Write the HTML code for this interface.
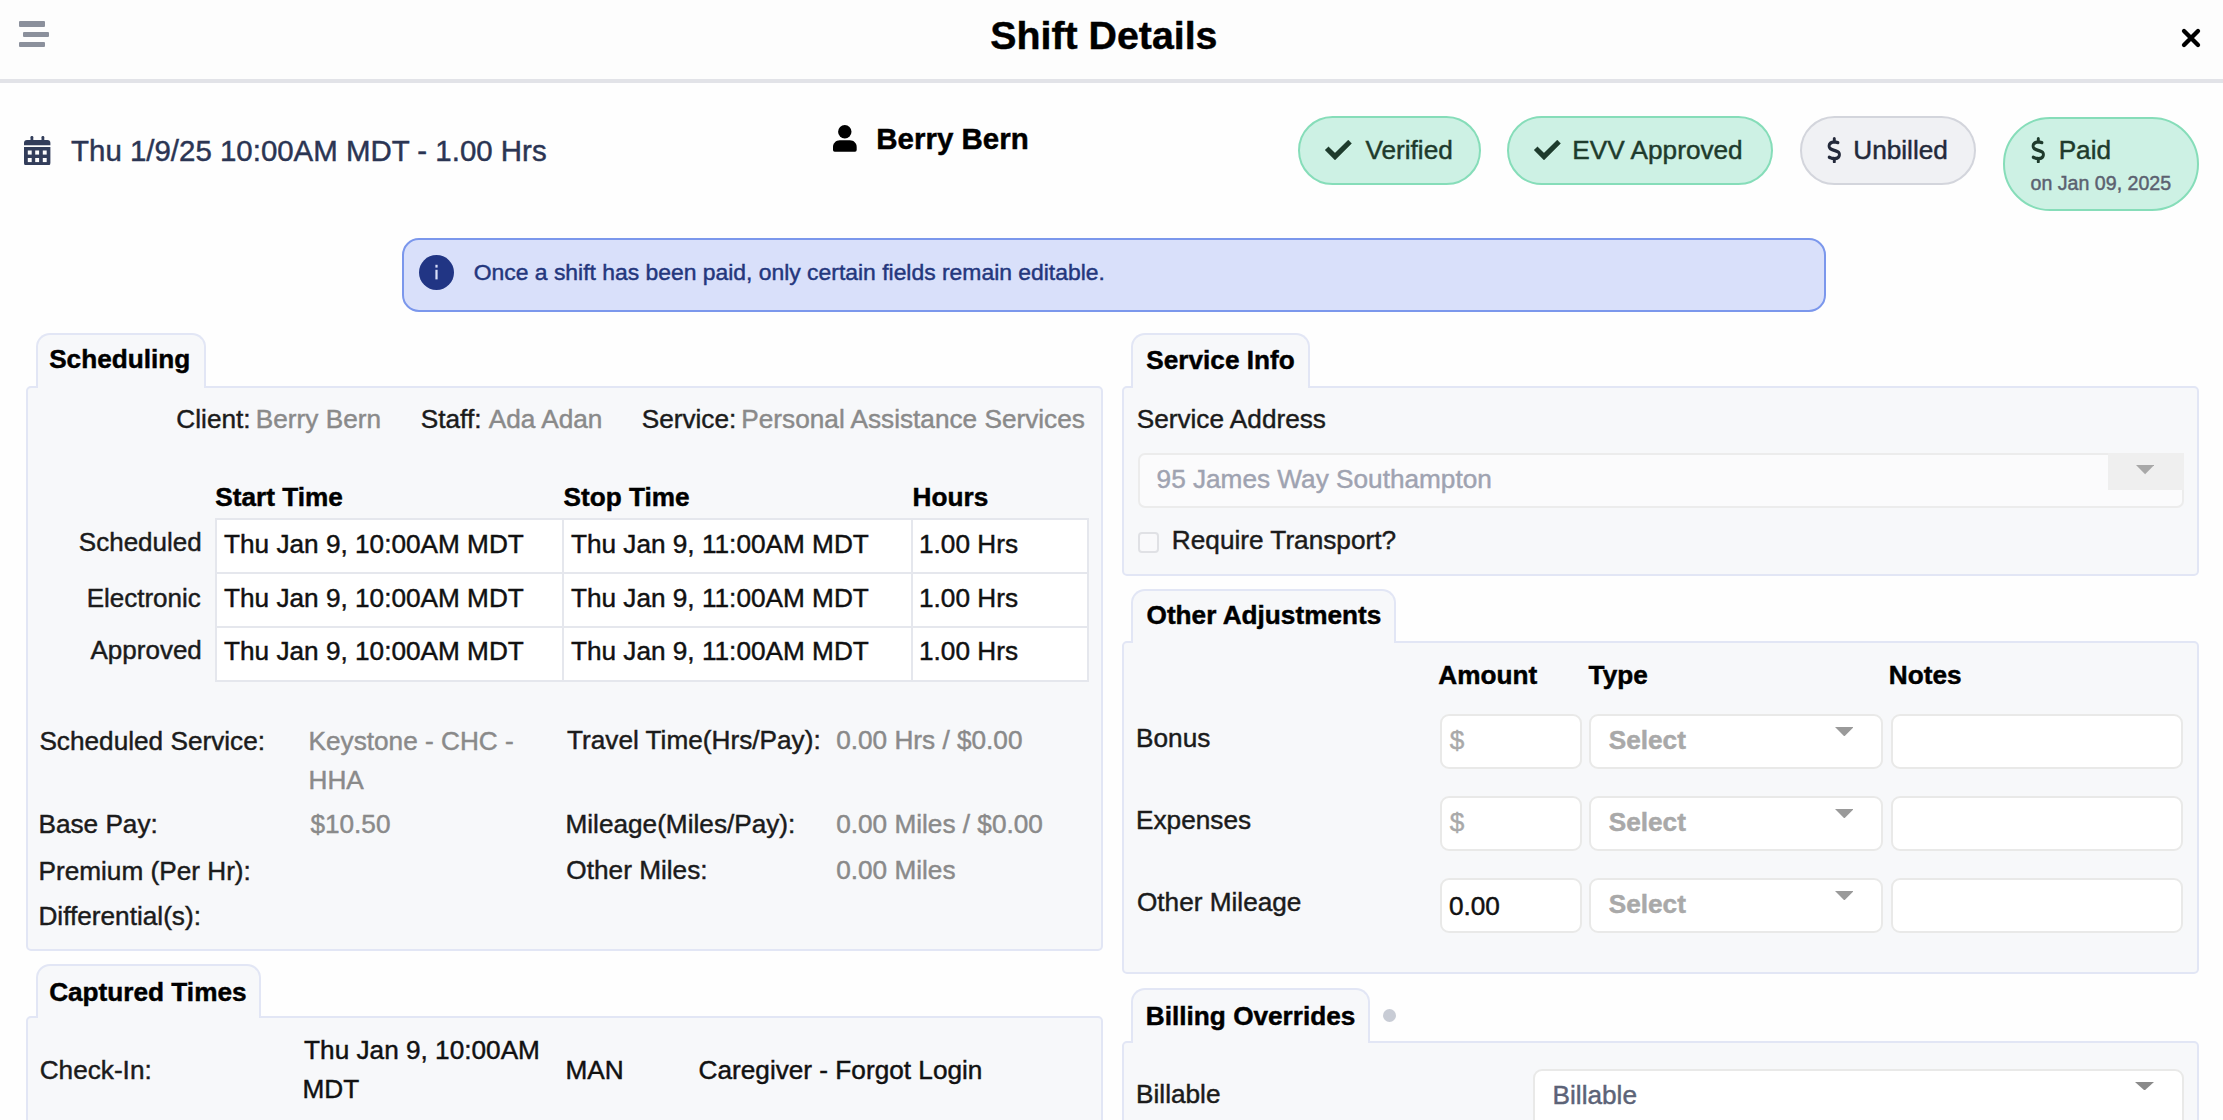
<!DOCTYPE html>
<html><head><meta charset="utf-8"><title>Shift Details</title>
<style>
html,body{margin:0;padding:0;}
body{width:2223px;height:1120px;overflow:hidden;position:relative;background:#fefefe;font-family:"Liberation Sans",sans-serif;}
.t{position:absolute;white-space:nowrap;line-height:1;font-family:"Liberation Sans",sans-serif;-webkit-text-stroke:0.45px currentColor;}
</style></head><body>
<div style="position:absolute;left:0;top:0;width:2223px;height:79px;background:#fdfdfd"></div>
<div style="position:absolute;left:0;top:79px;width:2223px;height:4px;background:#e2e3e8"></div>
<div style="position:absolute;left:18.75px;top:21.4px;width:25.85px;height:5.40px;background:#8b909c;border-radius:1px"></div>
<div style="position:absolute;left:22.8px;top:32.1px;width:25.90px;height:5.40px;background:#8b909c;border-radius:1px"></div>
<div style="position:absolute;left:18.75px;top:42px;width:25.85px;height:5.30px;background:#8b909c;border-radius:1px"></div>
<div class="t" style="left:990.37px;top:16.23px;font-size:39.3px;font-weight:bold;color:#000;">Shift Details</div>
<svg style="position:absolute;left:2178px;top:25.3px" width="26" height="26" viewBox="0 0 26 26"><path d="M6 6 L20 20 M20 6 L6 20" stroke="#000" stroke-width="4.3" stroke-linecap="round"/></svg>
<svg style="position:absolute;left:24.4px;top:135.5px" width="26.4" height="29.7" viewBox="0 0 26.4 29.7">
<rect x="6.5" y="0" width="2.8" height="6" rx="1.2" fill="#323d5a"/><rect x="17.5" y="0" width="2.8" height="6" rx="1.2" fill="#323d5a"/>
<path d="M0 6.9 Q0 3.9 3 3.9 H23.4 Q26.4 3.9 26.4 6.9 V9.3 H0 Z" fill="#323d5a"/>
<path d="M0 11 H26.4 V26.9 Q26.4 29.5 23.8 29.5 H2.6 Q0 29.5 0 26.9 Z" fill="#323d5a"/>
<g fill="#fdfdfd"><rect x="3.8" y="14.5" width="3.9" height="4.1"/><rect x="11.2" y="14.5" width="3.9" height="4.1"/><rect x="18.8" y="14.5" width="3.9" height="4.1"/>
<rect x="3.8" y="22" width="3.9" height="4.1"/><rect x="11.2" y="22" width="3.9" height="4.1"/><rect x="18.8" y="22" width="3.9" height="4.1"/></g></svg>
<div class="t" style="left:71.04px;top:136.27px;font-size:29.45px;color:#2b3553;">Thu 1/9/25 10:00AM MDT - 1.00 Hrs</div>
<svg style="position:absolute;left:832.9px;top:125px" width="23.7" height="26.8" viewBox="0 0 23.7 26.8">
<circle cx="11.8" cy="6.7" r="6.7" fill="#000"/><path d="M0 22 C0 18.2 3 15.3 6.8 15.3 H16.9 C20.7 15.3 23.7 18.2 23.7 22 V25 Q23.7 26.75 22 26.75 H1.7 Q0 26.75 0 25 Z" fill="#000"/></svg>
<div class="t" style="left:876.23px;top:123.53px;font-size:29.5px;font-weight:bold;color:#000;">Berry Bern</div>
<div style="position:absolute;left:1297.5px;top:116.3px;width:183.00px;height:69.00px;box-sizing:border-box;background:#cdf1e4;border:2px solid #86ddb9;border-radius:48px"></div>
<svg style="position:absolute;left:1325.4px;top:139.5px" width="26.6" height="20.1" viewBox="0 0 26.6 20.1"><path d="M0 10.1 L3.5 6.8 L10 13.1 L23.3 0 L26.6 3.4 L10 20.1 Z" fill="#1e3b2c" stroke="#1e3b2c" stroke-width="0.3" stroke-linejoin="round"/></svg>
<div class="t" style="left:1365.48px;top:137.12px;font-size:26.2px;color:#1e3b2c;">Verified</div>
<div style="position:absolute;left:1506.6px;top:116.3px;width:266.70px;height:69.00px;box-sizing:border-box;background:#cdf1e4;border:2px solid #86ddb9;border-radius:48px"></div>
<svg style="position:absolute;left:1534.2px;top:139.5px" width="26.6" height="20.1" viewBox="0 0 26.6 20.1"><path d="M0 10.1 L3.5 6.8 L10 13.1 L23.3 0 L26.6 3.4 L10 20.1 Z" fill="#1e3b2c" stroke="#1e3b2c" stroke-width="0.3" stroke-linejoin="round"/></svg>
<div class="t" style="left:1572.35px;top:137.12px;font-size:26.2px;color:#1e3b2c;">EVV Approved</div>
<div style="position:absolute;left:1799.8px;top:116.3px;width:176.70px;height:69.00px;box-sizing:border-box;background:#f0f1f4;border:2px solid #d3d5dc;border-radius:48px"></div>
<svg style="position:absolute;left:1827px;top:136.6px" width="14.6" height="26.6" viewBox="0 0 320 512" preserveAspectRatio="none"><path d="M160 0c17.7 0 32 14.3 32 32V67.7c1.6 .2 3.1 .4 4.7 .7c.4 .1 .7 .1 1.1 .2l48 8.8c17.4 3.2 28.9 19.9 25.7 37.2s-19.9 28.9-37.2 25.7l-47.5-8.7c-31.3-4.6-58.9-1.5-78.3 6.2s-27.2 18.300-29 28.1c-2 10.7-.5 16.7 1.2 20.4c1.8 3.9 5.5 8.3 12.8 13.2c16.3 10.7 41.3 17.7 73.7 26.3l2.9 .8c28.6 7.6 63.6 16.8 89.6 33.8c14.2 9.3 27.6 21.9 35.9 39.5c8.5 17.9 10.3 37.9 6.4 59.2c-6.9 38-33.1 63.4-65.6 76.7c-13.7 5.6-28.6 9.2-44.4 11V480c0 17.7-14.3 32-32 32s-32-14.3-32-32V445.1c-.4-.1-.9-.1-1.3-.2l-.2 0 0 0c-24.4-3.8-64.5-14.3-91.5-26.300c-16.1-7.2-23.4-26.1-16.2-42.2s26.1-23.4 42.2-16.2c20.9 9.300 55.3 18.5 75.2 21.6c31.9 4.7 58.2 2 76-5.3c16.9-6.9 24.6-16.9 26.8-28.9c1.9-10.6 .4-16.7-1.3-20.4c-1.9-4-5.6-8.4-13-13.3c-16.4-10.7-41.5-17.7-74-26.3l-2.8-.7 0 0C119.4 279.3 84.4 270 58.4 253c-14.2-9.3-27.5-22-35.8-39.6c-8.4-17.9-10.1-37.9-6.1-59.2C23.7 116 52.3 91.2 84.8 78.3c13.3-5.3 27.9-8.9 43.2-11V32c0-17.7 14.3-32 32-32z" fill="#23293a"/></svg>
<div class="t" style="left:1853.28px;top:137.12px;font-size:26.2px;color:#23293a;">Unbilled</div>
<div style="position:absolute;left:2003.1px;top:116.5px;width:195.50px;height:94.90px;box-sizing:border-box;background:#cdf1e4;border:2px solid #86ddb9;border-radius:48px"></div>
<svg style="position:absolute;left:2031.2px;top:136.6px" width="14.6" height="26.6" viewBox="0 0 320 512" preserveAspectRatio="none"><path d="M160 0c17.7 0 32 14.3 32 32V67.7c1.6 .2 3.1 .4 4.7 .7c.4 .1 .7 .1 1.1 .2l48 8.8c17.4 3.2 28.9 19.9 25.7 37.2s-19.9 28.9-37.2 25.7l-47.5-8.7c-31.3-4.6-58.9-1.5-78.3 6.2s-27.2 18.300-29 28.1c-2 10.7-.5 16.7 1.2 20.4c1.8 3.9 5.5 8.3 12.8 13.2c16.3 10.7 41.3 17.7 73.7 26.3l2.9 .8c28.6 7.6 63.6 16.8 89.6 33.8c14.2 9.3 27.6 21.9 35.9 39.5c8.5 17.9 10.3 37.9 6.4 59.2c-6.9 38-33.1 63.4-65.6 76.7c-13.7 5.6-28.6 9.2-44.4 11V480c0 17.7-14.3 32-32 32s-32-14.3-32-32V445.1c-.4-.1-.9-.1-1.3-.2l-.2 0 0 0c-24.4-3.8-64.5-14.3-91.5-26.300c-16.1-7.2-23.4-26.1-16.2-42.2s26.1-23.4 42.2-16.2c20.9 9.300 55.3 18.5 75.2 21.6c31.9 4.7 58.2 2 76-5.3c16.9-6.9 24.6-16.9 26.8-28.9c1.9-10.6 .4-16.7-1.3-20.4c-1.9-4-5.6-8.4-13-13.3c-16.4-10.7-41.5-17.7-74-26.3l-2.8-.7 0 0C119.4 279.3 84.4 270 58.4 253c-14.2-9.3-27.5-22-35.8-39.6c-8.4-17.9-10.1-37.9-6.1-59.2C23.7 116 52.3 91.2 84.8 78.3c13.3-5.3 27.9-8.9 43.2-11V32c0-17.7 14.3-32 32-32z" fill="#1e3b2c"/></svg>
<div class="t" style="left:2058.65px;top:137.32px;font-size:26.2px;color:#1e3b2c;">Paid</div>
<div class="t" style="left:2030.58px;top:174.41px;font-size:19.6px;color:#5b6170;">on Jan 09, 2025</div>
<div style="position:absolute;left:401.6px;top:238px;width:1424.2px;height:74px;box-sizing:border-box;background:#d9e0fa;border:2px solid #7b97ec;border-radius:17px"></div>
<svg style="position:absolute;left:418.5px;top:255px" width="35" height="35" viewBox="0 0 35 35"><circle cx="17.5" cy="17.5" r="17.5" fill="#213584"/><rect x="16.4" y="9.8" width="2.2" height="2.8" fill="#d9e0fa"/><rect x="16.4" y="14.8" width="2.2" height="9.6" fill="#d9e0fa"/></svg>
<div class="t" style="left:473.72px;top:261.42px;font-size:22.9px;color:#24377d;">Once a shift has been paid, only certain fields remain editable.</div>
<div style="position:absolute;left:26.4px;top:385.7px;width:1077.00px;height:565.40px;box-sizing:border-box;background:#f7f8fa;border:2px solid #e2e6f5;border-radius:5px"></div>
<div style="position:absolute;left:35.7px;top:333.2px;width:170.20px;height:54.50px;box-sizing:border-box;background:#f7f8fa;border:2px solid #e2e6f5;border-bottom:none;border-radius:14px 14px 0 0"></div>
<div class="t" style="left:49.15px;top:346.42px;font-size:26.2px;font-weight:bold;color:#000;">Scheduling</div>
<div style="position:absolute;left:26.4px;top:1016.3px;width:1077.00px;height:183.70px;box-sizing:border-box;background:#f7f8fa;border:2px solid #e2e6f5;border-radius:5px"></div>
<div style="position:absolute;left:35.7px;top:964.2px;width:225.30px;height:54.10px;box-sizing:border-box;background:#f7f8fa;border:2px solid #e2e6f5;border-bottom:none;border-radius:14px 14px 0 0"></div>
<div class="t" style="left:49.13px;top:979.12px;font-size:26.2px;font-weight:bold;color:#000;">Captured Times</div>
<div style="position:absolute;left:1122.1px;top:385.7px;width:1076.90px;height:190.00px;box-sizing:border-box;background:#f7f8fa;border:2px solid #e2e6f5;border-radius:5px"></div>
<div style="position:absolute;left:1131.4px;top:333.2px;width:179.10px;height:54.50px;box-sizing:border-box;background:#f7f8fa;border:2px solid #e2e6f5;border-bottom:none;border-radius:14px 14px 0 0"></div>
<div class="t" style="left:1146.25px;top:346.72px;font-size:26.2px;font-weight:bold;color:#000;">Service Info</div>
<div style="position:absolute;left:1122.1px;top:641px;width:1076.90px;height:333.30px;box-sizing:border-box;background:#f7f8fa;border:2px solid #e2e6f5;border-radius:5px"></div>
<div style="position:absolute;left:1131.4px;top:588.8px;width:265.10px;height:54.20px;box-sizing:border-box;background:#f7f8fa;border:2px solid #e2e6f5;border-bottom:none;border-radius:14px 14px 0 0"></div>
<div class="t" style="left:1146.53px;top:602.32px;font-size:26.2px;font-weight:bold;color:#000;">Other Adjustments</div>
<div style="position:absolute;left:1122.1px;top:1040.7px;width:1076.90px;height:159.30px;box-sizing:border-box;background:#f7f8fa;border:2px solid #e2e6f5;border-radius:5px"></div>
<div style="position:absolute;left:1131.4px;top:988.4px;width:239.00px;height:54.30px;box-sizing:border-box;background:#f7f8fa;border:2px solid #e2e6f5;border-bottom:none;border-radius:14px 14px 0 0"></div>
<div class="t" style="left:1145.85px;top:1003.42px;font-size:26.2px;font-weight:bold;color:#000;">Billing Overrides</div>
<div class="t" style="left:176.37px;top:405.82px;font-size:26.2px;color:#1b1b1b;">Client:</div>
<div class="t" style="left:255.85px;top:405.82px;font-size:26.2px;color:#8a8a8a;">Berry Bern</div>
<div class="t" style="left:420.81px;top:405.82px;font-size:26.2px;color:#1b1b1b;">Staff:</div>
<div class="t" style="left:488.75px;top:405.82px;font-size:26.2px;color:#8a8a8a;">Ada Adan</div>
<div class="t" style="left:641.71px;top:405.82px;font-size:26.2px;color:#1b1b1b;">Service:</div>
<div class="t" style="left:741.35px;top:405.82px;font-size:26.2px;color:#8a8a8a;">Personal Assistance Services</div>
<div class="t" style="left:215.35px;top:484.12px;font-size:26.2px;font-weight:bold;color:#000;">Start Time</div>
<div class="t" style="left:563.55px;top:483.72px;font-size:26.2px;font-weight:bold;color:#000;">Stop Time</div>
<div class="t" style="left:912.55px;top:483.72px;font-size:26.2px;font-weight:bold;color:#000;">Hours</div>
<div style="position:absolute;left:215.5px;top:518.7px;width:872.20px;height:162.30px;background:#fff"></div>
<div style="position:absolute;left:214.5px;top:517.7px;width:2px;height:164.30px;background:#e5e7ed"></div>
<div style="position:absolute;left:561.8px;top:517.7px;width:2px;height:164.30px;background:#e5e7ed"></div>
<div style="position:absolute;left:911px;top:517.7px;width:2px;height:164.30px;background:#e5e7ed"></div>
<div style="position:absolute;left:1086.7px;top:517.7px;width:2px;height:164.30px;background:#e5e7ed"></div>
<div style="position:absolute;left:214.5px;top:517.7px;width:874.20px;height:2px;background:#e5e7ed"></div>
<div style="position:absolute;left:214.5px;top:571.7px;width:874.20px;height:2px;background:#e5e7ed"></div>
<div style="position:absolute;left:214.5px;top:626px;width:874.20px;height:2px;background:#e5e7ed"></div>
<div style="position:absolute;left:214.5px;top:680px;width:874.20px;height:2px;background:#e5e7ed"></div>
<div class="t" style="left:78.87px;top:529.09px;font-size:26px;color:#1b1b1b;">Scheduled</div>
<div class="t" style="left:224.01px;top:530.72px;font-size:26.2px;color:#111;">Thu Jan 9, 10:00AM MDT</div>
<div class="t" style="left:570.91px;top:530.72px;font-size:26.2px;color:#111;">Thu Jan 9, 11:00AM MDT</div>
<div class="t" style="left:919.00px;top:530.72px;font-size:26.2px;color:#111;">1.00 Hrs</div>
<div class="t" style="left:86.67px;top:585.49px;font-size:26px;color:#1b1b1b;">Electronic</div>
<div class="t" style="left:224.01px;top:585.32px;font-size:26.2px;color:#111;">Thu Jan 9, 10:00AM MDT</div>
<div class="t" style="left:570.91px;top:585.32px;font-size:26.2px;color:#111;">Thu Jan 9, 11:00AM MDT</div>
<div class="t" style="left:919.00px;top:585.32px;font-size:26.2px;color:#111;">1.00 Hrs</div>
<div class="t" style="left:90.53px;top:637.49px;font-size:26px;color:#1b1b1b;">Approved</div>
<div class="t" style="left:224.01px;top:638.32px;font-size:26.2px;color:#111;">Thu Jan 9, 10:00AM MDT</div>
<div class="t" style="left:570.91px;top:638.32px;font-size:26.2px;color:#111;">Thu Jan 9, 11:00AM MDT</div>
<div class="t" style="left:919.00px;top:638.32px;font-size:26.2px;color:#111;">1.00 Hrs</div>
<div class="t" style="left:39.41px;top:727.62px;font-size:26.2px;color:#1b1b1b;">Scheduled Service:</div>
<div class="t" style="left:308.55px;top:727.62px;font-size:26.2px;color:#8a8a8a;">Keystone - CHC -</div>
<div class="t" style="left:308.55px;top:766.52px;font-size:26.2px;color:#8a8a8a;">HHA</div>
<div class="t" style="left:38.45px;top:810.92px;font-size:26.2px;color:#1b1b1b;">Base Pay:</div>
<div class="t" style="left:310.42px;top:810.92px;font-size:26.2px;color:#8a8a8a;">$10.50</div>
<div class="t" style="left:38.45px;top:857.52px;font-size:26.2px;color:#1b1b1b;">Premium (Per Hr):</div>
<div class="t" style="left:38.45px;top:902.52px;font-size:26.2px;color:#1b1b1b;">Differential(s):</div>
<div class="t" style="left:567.01px;top:726.82px;font-size:26.2px;color:#1b1b1b;">Travel Time(Hrs/Pay):</div>
<div class="t" style="left:836.18px;top:726.82px;font-size:26.2px;color:#8a8a8a;">0.00 Hrs / $0.00</div>
<div class="t" style="left:565.45px;top:811.22px;font-size:26.2px;color:#1b1b1b;">Mileage(Miles/Pay):</div>
<div class="t" style="left:836.18px;top:811.22px;font-size:26.2px;color:#8a8a8a;">0.00 Miles / $0.00</div>
<div class="t" style="left:566.36px;top:857.12px;font-size:26.2px;color:#1b1b1b;">Other Miles:</div>
<div class="t" style="left:836.18px;top:857.12px;font-size:26.2px;color:#8a8a8a;">0.00 Miles</div>
<div class="t" style="left:39.67px;top:1057.42px;font-size:26.2px;color:#1b1b1b;">Check-In:</div>
<div class="t" style="left:304.11px;top:1037.12px;font-size:26.2px;color:#111;">Thu Jan 9, 10:00AM</div>
<div class="t" style="left:302.55px;top:1075.72px;font-size:26.2px;color:#111;">MDT</div>
<div class="t" style="left:565.45px;top:1056.92px;font-size:26.2px;color:#111;">MAN</div>
<div class="t" style="left:698.57px;top:1056.92px;font-size:26.2px;color:#111;">Caregiver - Forgot Login</div>
<div class="t" style="left:1136.71px;top:406.02px;font-size:26.2px;color:#1b1b1b;">Service Address</div>
<div style="position:absolute;left:1137.5px;top:453px;width:1046px;height:54.6px;box-sizing:border-box;background:#fbfbfc;border:2px solid #ececec;border-radius:7px"></div>
<div style="position:absolute;left:2107.5px;top:452.7px;width:76.5px;height:37px;background:#efefef"></div>
<svg style="position:absolute;left:2135.8px;top:465.4px" width="18.2" height="9.3" viewBox="0 0 18.2 9.3"><path d="M0 0 H18.2 L9.1 9.3 Z" fill="#a8a8a8"/></svg>
<div class="t" style="left:1156.57px;top:466.02px;font-size:26.2px;color:#9fa3b1;">95 James Way Southampton</div>
<div style="position:absolute;left:1137.5px;top:531.8px;width:21px;height:21.2px;box-sizing:border-box;background:#f9f9fb;border:2px solid #e0e1e5;border-radius:4px"></div>
<div class="t" style="left:1171.85px;top:527.22px;font-size:26.2px;color:#1b1b1b;">Require Transport?</div>
<div class="t" style="left:1438.25px;top:662.42px;font-size:26.2px;font-weight:bold;color:#000;">Amount</div>
<div class="t" style="left:1588.61px;top:662.12px;font-size:26.2px;font-weight:bold;color:#000;">Type</div>
<div class="t" style="left:1888.85px;top:661.62px;font-size:26.2px;font-weight:bold;color:#000;">Notes</div>
<div class="t" style="left:1136.05px;top:725.42px;font-size:26.2px;color:#1b1b1b;">Bonus</div>
<div style="position:absolute;left:1439.6px;top:714.3px;width:142.40px;height:54.6px;box-sizing:border-box;background:#fff;border:2px solid #e9e9e8;border-radius:9px"></div>
<div style="position:absolute;left:1589.2px;top:714.3px;width:293.80px;height:54.6px;box-sizing:border-box;background:#fff;border:2px solid #e9e9e8;border-radius:9px"></div>
<div style="position:absolute;left:1891.3px;top:714.3px;width:292.00px;height:54.6px;box-sizing:border-box;background:#fff;border:2px solid #e9e9e8;border-radius:9px"></div>
<div class="t" style="left:1449.82px;top:726.82px;font-size:26.2px;color:#a9a9a9;">$</div>
<div class="t" style="left:1608.75px;top:727.12px;font-size:26.2px;font-weight:bold;color:#a9a9a9;">Select</div>
<svg style="position:absolute;left:1834.8px;top:727px" width="18.7" height="9.4" viewBox="0 0 18.7 9.4"><path d="M0 0 H18.7 L9.35 9.4 Z" fill="#9a9a9a"/></svg>
<div class="t" style="left:1136.05px;top:807.42px;font-size:26.2px;color:#1b1b1b;">Expenses</div>
<div style="position:absolute;left:1439.6px;top:796.3px;width:142.40px;height:54.6px;box-sizing:border-box;background:#fff;border:2px solid #e9e9e8;border-radius:9px"></div>
<div style="position:absolute;left:1589.2px;top:796.3px;width:293.80px;height:54.6px;box-sizing:border-box;background:#fff;border:2px solid #e9e9e8;border-radius:9px"></div>
<div style="position:absolute;left:1891.3px;top:796.3px;width:292.00px;height:54.6px;box-sizing:border-box;background:#fff;border:2px solid #e9e9e8;border-radius:9px"></div>
<div class="t" style="left:1449.82px;top:808.82px;font-size:26.2px;color:#a9a9a9;">$</div>
<div class="t" style="left:1608.75px;top:809.12px;font-size:26.2px;font-weight:bold;color:#a9a9a9;">Select</div>
<svg style="position:absolute;left:1834.8px;top:809px" width="18.7" height="9.4" viewBox="0 0 18.7 9.4"><path d="M0 0 H18.7 L9.35 9.4 Z" fill="#9a9a9a"/></svg>
<div class="t" style="left:1136.96px;top:889.42px;font-size:26.2px;color:#1b1b1b;">Other Mileage</div>
<div style="position:absolute;left:1439.6px;top:878.3px;width:142.40px;height:54.6px;box-sizing:border-box;background:#fff;border:2px solid #e9e9e8;border-radius:9px"></div>
<div style="position:absolute;left:1589.2px;top:878.3px;width:293.80px;height:54.6px;box-sizing:border-box;background:#fff;border:2px solid #e9e9e8;border-radius:9px"></div>
<div style="position:absolute;left:1891.3px;top:878.3px;width:292.00px;height:54.6px;box-sizing:border-box;background:#fff;border:2px solid #e9e9e8;border-radius:9px"></div>
<div class="t" style="left:1448.98px;top:892.82px;font-size:26.2px;color:#111;">0.00</div>
<div class="t" style="left:1608.75px;top:891.12px;font-size:26.2px;font-weight:bold;color:#a9a9a9;">Select</div>
<svg style="position:absolute;left:1834.8px;top:891px" width="18.7" height="9.4" viewBox="0 0 18.7 9.4"><path d="M0 0 H18.7 L9.35 9.4 Z" fill="#9a9a9a"/></svg>
<div style="position:absolute;left:1383.3px;top:1009px;width:13px;height:13px;border-radius:50%;background:#c8ccd5"></div>
<div class="t" style="left:1136.05px;top:1080.62px;font-size:26.2px;color:#1b1b1b;">Billable</div>
<div style="position:absolute;left:1533px;top:1069px;width:650.5px;height:80px;box-sizing:border-box;background:#fff;border:2px solid #e9e9e8;border-radius:9px"></div>
<div class="t" style="left:1552.55px;top:1081.82px;font-size:26.2px;color:#5c6377;">Billable</div>
<svg style="position:absolute;left:2135.4px;top:1081.8px" width="19.1" height="8.5" viewBox="0 0 19.1 8.5"><path d="M0 0 H19.1 L9.55 8.5 Z" fill="#8a8a8a"/></svg>
</body></html>
